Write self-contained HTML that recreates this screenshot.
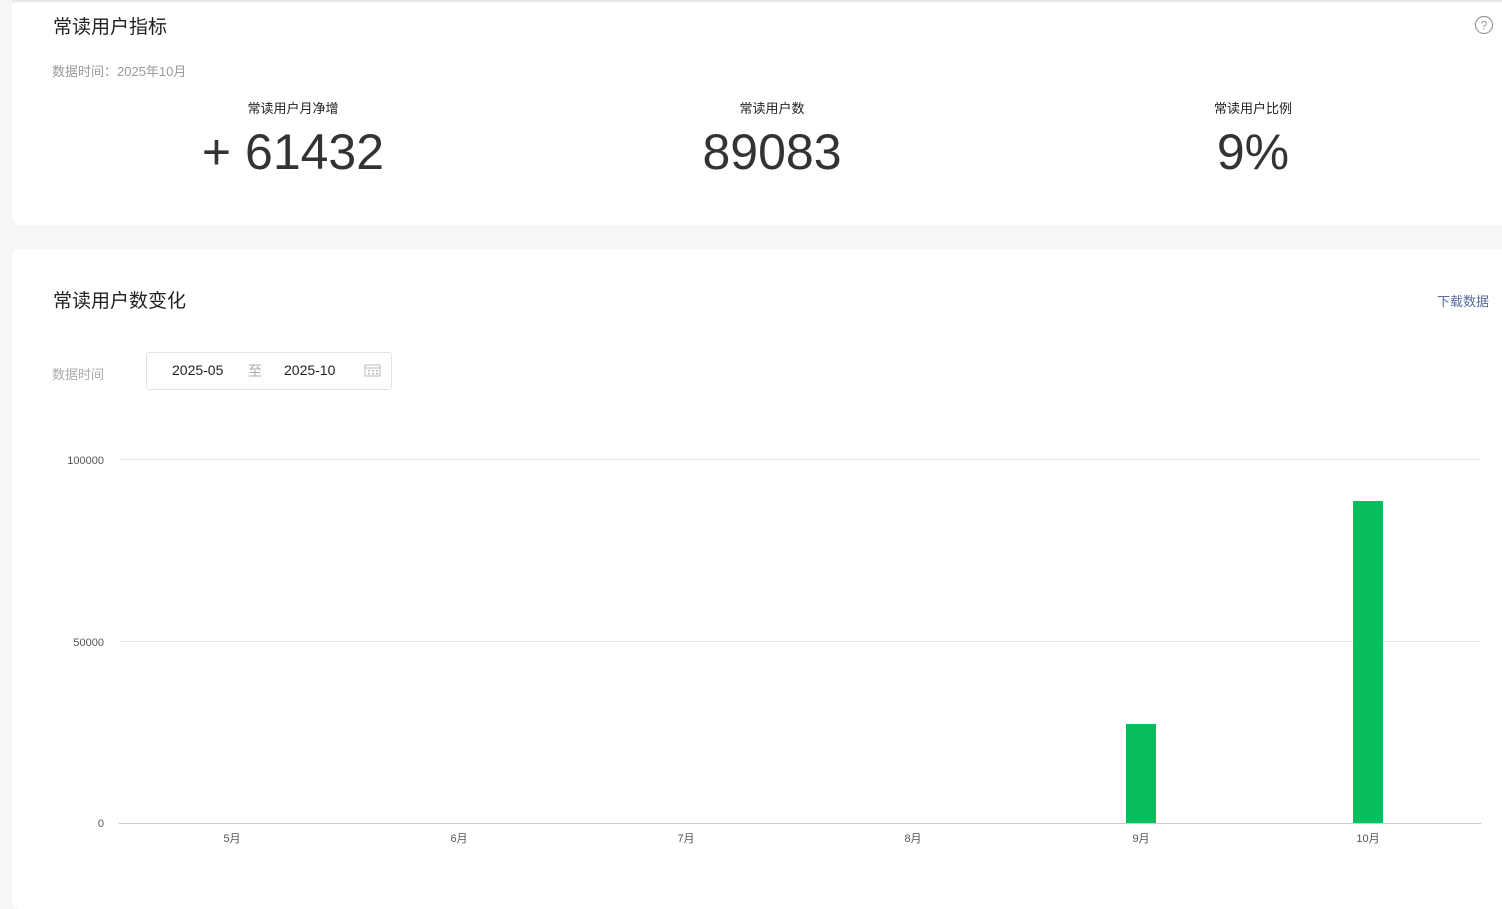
<!DOCTYPE html>
<html><head><meta charset="utf-8"><style>
*{margin:0;padding:0;box-sizing:border-box}
body{width:1502px;height:893px;background:#f5f6f8;font-family:"Liberation Sans","Noto Sans CJK SC",sans-serif;position:relative;overflow:hidden;color:#1a1a1a}
.card{position:absolute;background:#fff;left:12px;right:0;border-radius:8px 0 0 8px}
.t{position:absolute;white-space:nowrap}
.n{font-size:50px;color:#333;top:123px}
</style></head><body>
<div style="position:absolute;left:12px;right:0;top:0;height:2px;background:#e8e8e8"></div>
<div class="card" style="top:3px;height:222px;border-radius:0 0 0 8px"></div>
<div class="t" style="left:53px;top:12px;font-size:19px;color:#222">常读用户指标</div>
<div class="t" style="left:52px;top:61px;font-size:13px;color:#999">数据时间：2025年10月</div>
<svg style="position:absolute;left:1474px;top:15px" width="20" height="20"><circle cx="10" cy="10" r="8.5" fill="none" stroke="#999" stroke-width="1.2"/><text x="10" y="14.5" font-size="12" text-anchor="middle" fill="#999" font-family="Liberation Sans">?</text></svg>
<div class="t" style="left:193px;width:200px;text-align:center;top:98px;font-size:13px;color:#222">常读用户月净增</div>
<div class="t n" style="left:193px;width:200px;text-align:center">+ 61432</div>
<div class="t" style="left:672px;width:200px;text-align:center;top:98px;font-size:13px;color:#222">常读用户数</div>
<div class="t n" style="left:672px;width:200px;text-align:center">89083</div>
<div class="t" style="left:1153px;width:200px;text-align:center;top:98px;font-size:13px;color:#222">常读用户比例</div>
<div class="t n" style="left:1153px;width:200px;text-align:center">9%</div>

<div class="card" style="top:249px;height:660px"></div>
<div class="t" style="left:53px;top:286px;font-size:19px;color:#222">常读用户数变化</div>
<div class="t" style="left:1437px;top:291px;font-size:13px;color:#5a6aa0">下载数据</div>
<div class="t" style="left:52px;top:364px;font-size:13px;color:#aaa">数据时间</div>
<div style="position:absolute;left:146px;top:352px;width:246px;height:38px;border:1px solid #e3e3e3;border-radius:3px"></div>
<div class="t" style="left:172px;top:362px;font-size:14px;color:#222">2025-05</div>
<div class="t" style="left:248px;top:361px;font-size:14px;color:#aaa">至</div>
<div class="t" style="left:284px;top:362px;font-size:14px;color:#222">2025-10</div>
<svg style="position:absolute;left:364px;top:363px" width="18" height="15"><rect x="1" y="2" width="15" height="11" fill="none" stroke="#bbb"/><line x1="1" y1="5" x2="16" y2="5" stroke="#bbb"/><g fill="#bbb"><rect x="4" y="7" width="2" height="1.5"/><rect x="8" y="7" width="2" height="1.5"/><rect x="12" y="7" width="2" height="1.5"/><rect x="4" y="10" width="2" height="1.5"/><rect x="8" y="10" width="2" height="1.5"/><rect x="12" y="10" width="2" height="1.5"/></g></svg>

<svg style="position:absolute;left:0;top:0" width="1502" height="893" font-family="Liberation Sans" font-size="11" fill="#555">
<line x1="119" y1="459.5" x2="1481" y2="459.5" stroke="#e6e6e6"/>
<line x1="119" y1="641.5" x2="1481" y2="641.5" stroke="#e6e6e6"/>
<line x1="119" y1="823.5" x2="1481" y2="823.5" stroke="#ccc"/>
<text x="104" y="464" text-anchor="end">100000</text>
<text x="104" y="646" text-anchor="end">50000</text>
<text x="104" y="827" text-anchor="end">0</text>
<rect x="1126" y="724" width="30" height="99" fill="#07be5d"/>
<rect x="1353" y="501" width="30" height="322" fill="#07be5d"/>
<g text-anchor="middle" font-family="Liberation Sans,Noto Sans CJK SC,sans-serif">
<text x="232" y="842">5月</text><text x="459" y="842">6月</text><text x="686" y="842">7月</text><text x="913" y="842">8月</text><text x="1141" y="842">9月</text><text x="1368" y="842">10月</text>
</g></svg>
</body></html>
